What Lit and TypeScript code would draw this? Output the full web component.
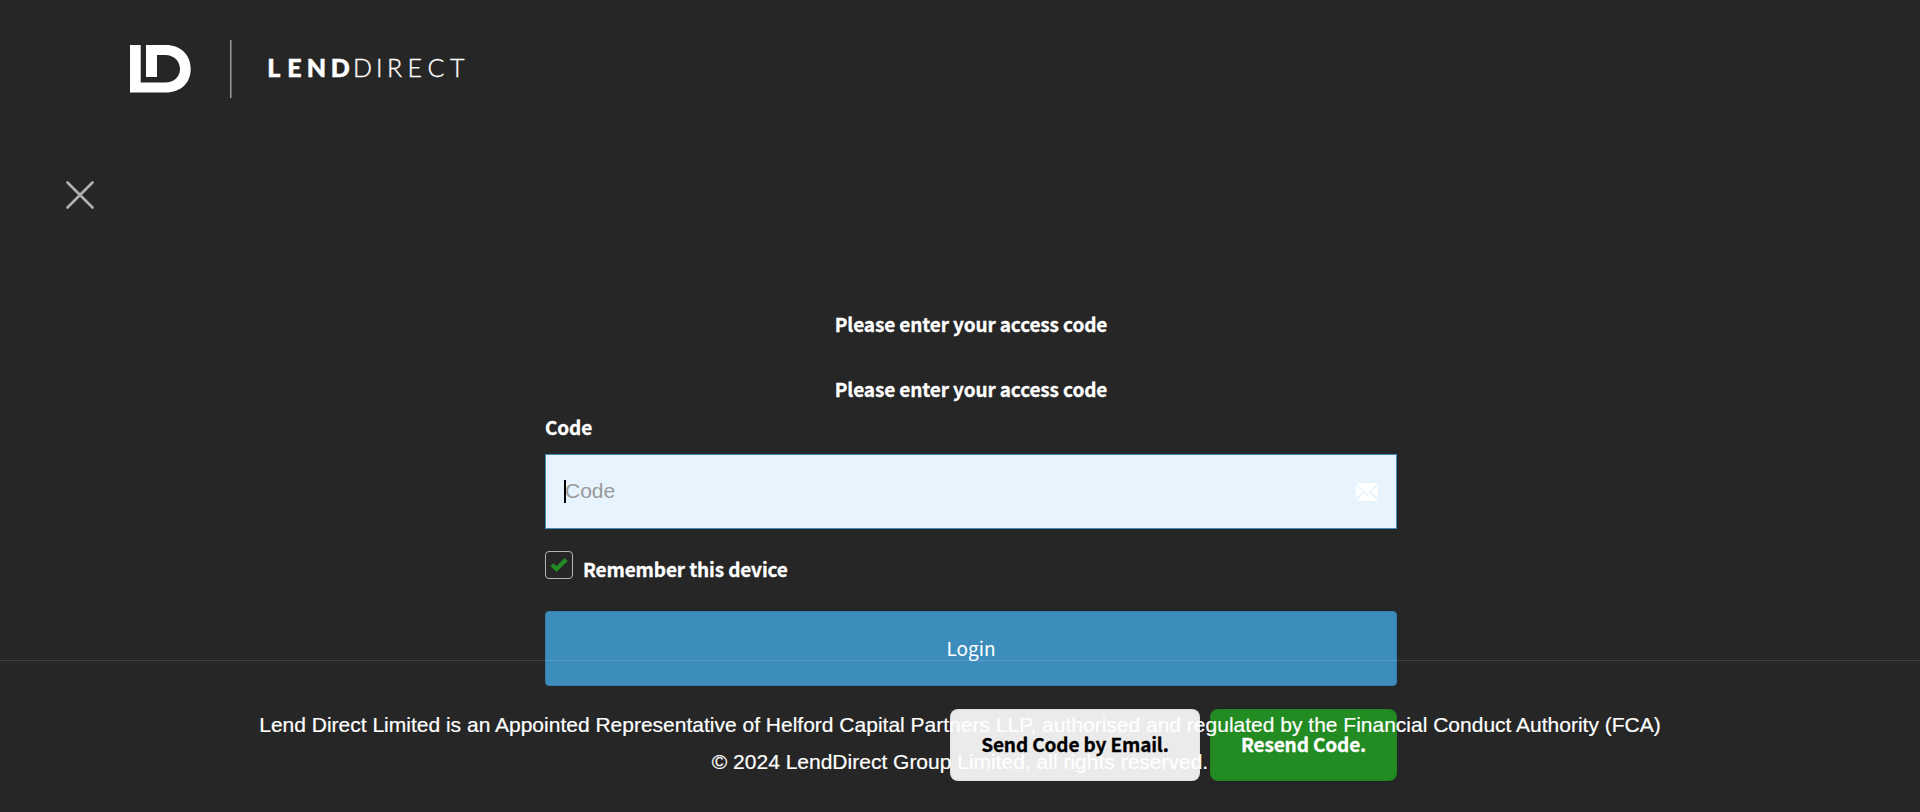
import { LitElement, html, css } from "lit";
import { customElement } from "lit/decorators.js";

@customElement("app-root")
export class AppRoot extends LitElement {
  static styles = css`
    :host {
      display: block;
      position: relative;
      box-sizing: border-box;
      width: 100%;
      height: 812px;
      overflow: hidden;
      background: #262626;
      color: #fff;
      font-family: "Noto Sans CJK SC", "Open Sans", sans-serif;
      font-size: 19px;
      line-height: 30px;
    }
    * { box-sizing: border-box; }
    svg { display: block; }
    .header { height: 136px; padding: 36px 0 0 126px; }
    .brand { font-family: "Lato", sans-serif; font-size: 25px; fill: #fff; stroke: #fff; }
    .heavy { font-weight: 900; stroke-width: 0.5px; }
    .light { font-weight: 300; stroke-width: 0.35px; }
    .close { height: 173px; padding: 43px 0 0 64px; }
    .panel {
      display: flex;
      flex-direction: column;
      width: 852px;
      margin-left: 545px;
    }
    .title, .label, .remember, .action {
      font-weight: 700;
      letter-spacing: -0.13px;
      -webkit-text-stroke: 0.3px currentColor;
    }
    .title { text-align: center; height: 30px; margin-bottom: 35px; }
    .title.second { margin-bottom: 8px; }
    .label { margin-bottom: 12px; }
    .field {
      display: flex;
      align-items: center;
      height: 75px;
      padding: 0 18px;
      border: 1px solid #3c8dbc;
      background: #e8f4fd;
      font-family: "Liberation Sans", Arial, sans-serif;
      font-size: 21px;
      color: #999;
    }
    .caret { width: 2px; height: 23px; margin-right: -1px; background: #000; }
    .placeholder { flex: 1; padding-bottom: 2px; }
    .check-row { display: flex; height: 60px; margin-top: 22px; gap: 10px; }
    .box {
      display: flex;
      align-items: center;
      justify-content: center;
      width: 28px;
      height: 28px;
      border: 1px solid #b4b4b4;
      border-radius: 4px;
    }
    .remember { padding-top: 3px; }
    .login {
      height: 75px;
      border: 1px solid #367fa9;
      border-radius: 4px;
      background: #3c8dbc;
      text-align: center;
      padding-top: 21px;
    }
    .actions {
      display: flex;
      justify-content: flex-end;
      gap: 10px;
      margin-top: 23px;
      border-radius: 4px;
      box-shadow: 0 1px 2px rgba(0, 0, 0, 0.1);
    }
    .action {
      height: 72px;
      padding-top: 20px;
      border-radius: 8px;
      text-align: center;
      box-shadow: inset 0 0 3px rgba(0, 0, 0, 0.09);
    }
    .email { width: 250px; background: #ebebeb; color: #000; }
    .resend { width: 187px; background: #228b22; }
    .footer {
      position: absolute;
      inset: 660px 0 auto 0;
      height: 152px;
      padding-top: 45px;
      border-top: 1px solid rgba(255, 255, 255, 0.12);
      font-family: "Liberation Sans", Arial, sans-serif;
      font-size: 21px;
      line-height: 37px;
      text-align: center;
      -webkit-text-stroke: 0.2px currentColor;
    }
  `;

  render() {
    return html`
      <header class="header">
        <svg width="346" height="66" viewBox="126 36 346 66">
          <path fill="#fff" d="M130 45h10.700v37.500H165c9.500 0 15-6 15-13.500S174.500 55 165 55h-8v22h-11V45h19.500c15.500 0 25.200 10 25.200 24s-9.700 23.500-25.200 23.500H130z" />
          <path fill="#999" d="M230 40h1.500v58H230z" />
          <text class="brand heavy" y="77" x="267.300 287.300 306.700 330.700">LEND</text>
          <text class="brand light" y="77" x="353 376 387 407.500 427.500 450">DIRECT</text>
        </svg>
      </header>
      <div class="close">
        <svg width="32" height="32" viewBox="64 179 32 32">
          <path d="M67.500 182.500l25 25m0-25l-25 25" fill="none" stroke="#b0b0b0" stroke-width="2.700" stroke-linecap="round" />
        </svg>
      </div>
      <main class="panel">
        <div class="title"><span>Please enter your access code</span></div>
        <div class="title second"><span>Please enter your access code</span></div>
        <div class="label">Code</div>
        <div class="field">
          <i class="caret"></i>
          <span class="placeholder">Code</span>
          <svg width="22" height="18" viewBox="0 0 22 18" fill="#fff">
            <path d="M0.500 0h21L11 11zM0 2l6.500 6.500L0 15zM22 2v13l-6.500-6.500zM0.500 18l7.500-8 3 3 3-3 7.500 8z" />
          </svg>
        </div>
        <div class="check-row">
          <div class="box">
            <svg width="18" height="14" viewBox="0 0 18 14"><path fill="#228b22" d="M0.500 8.200L3.500 5.200l3 2.900L14.700 0l3 3L6.500 14z" /></svg>
          </div>
          <div class="remember">Remember this device</div>
        </div>
        <div class="login">Login</div>
        <div class="actions">
          <div class="action email">Send Code by Email.</div>
          <div class="action resend">Resend Code.</div>
        </div>
      </main>
      <footer class="footer">
        <div>Lend Direct Limited is an Appointed Representative of Helford Capital Partners LLP, authorised and regulated by the Financial Conduct Authority (FCA)</div>
        <div>© 2024 LendDirect Group Limited, all rights reserved.</div>
      </footer>
    `;
  }
}
